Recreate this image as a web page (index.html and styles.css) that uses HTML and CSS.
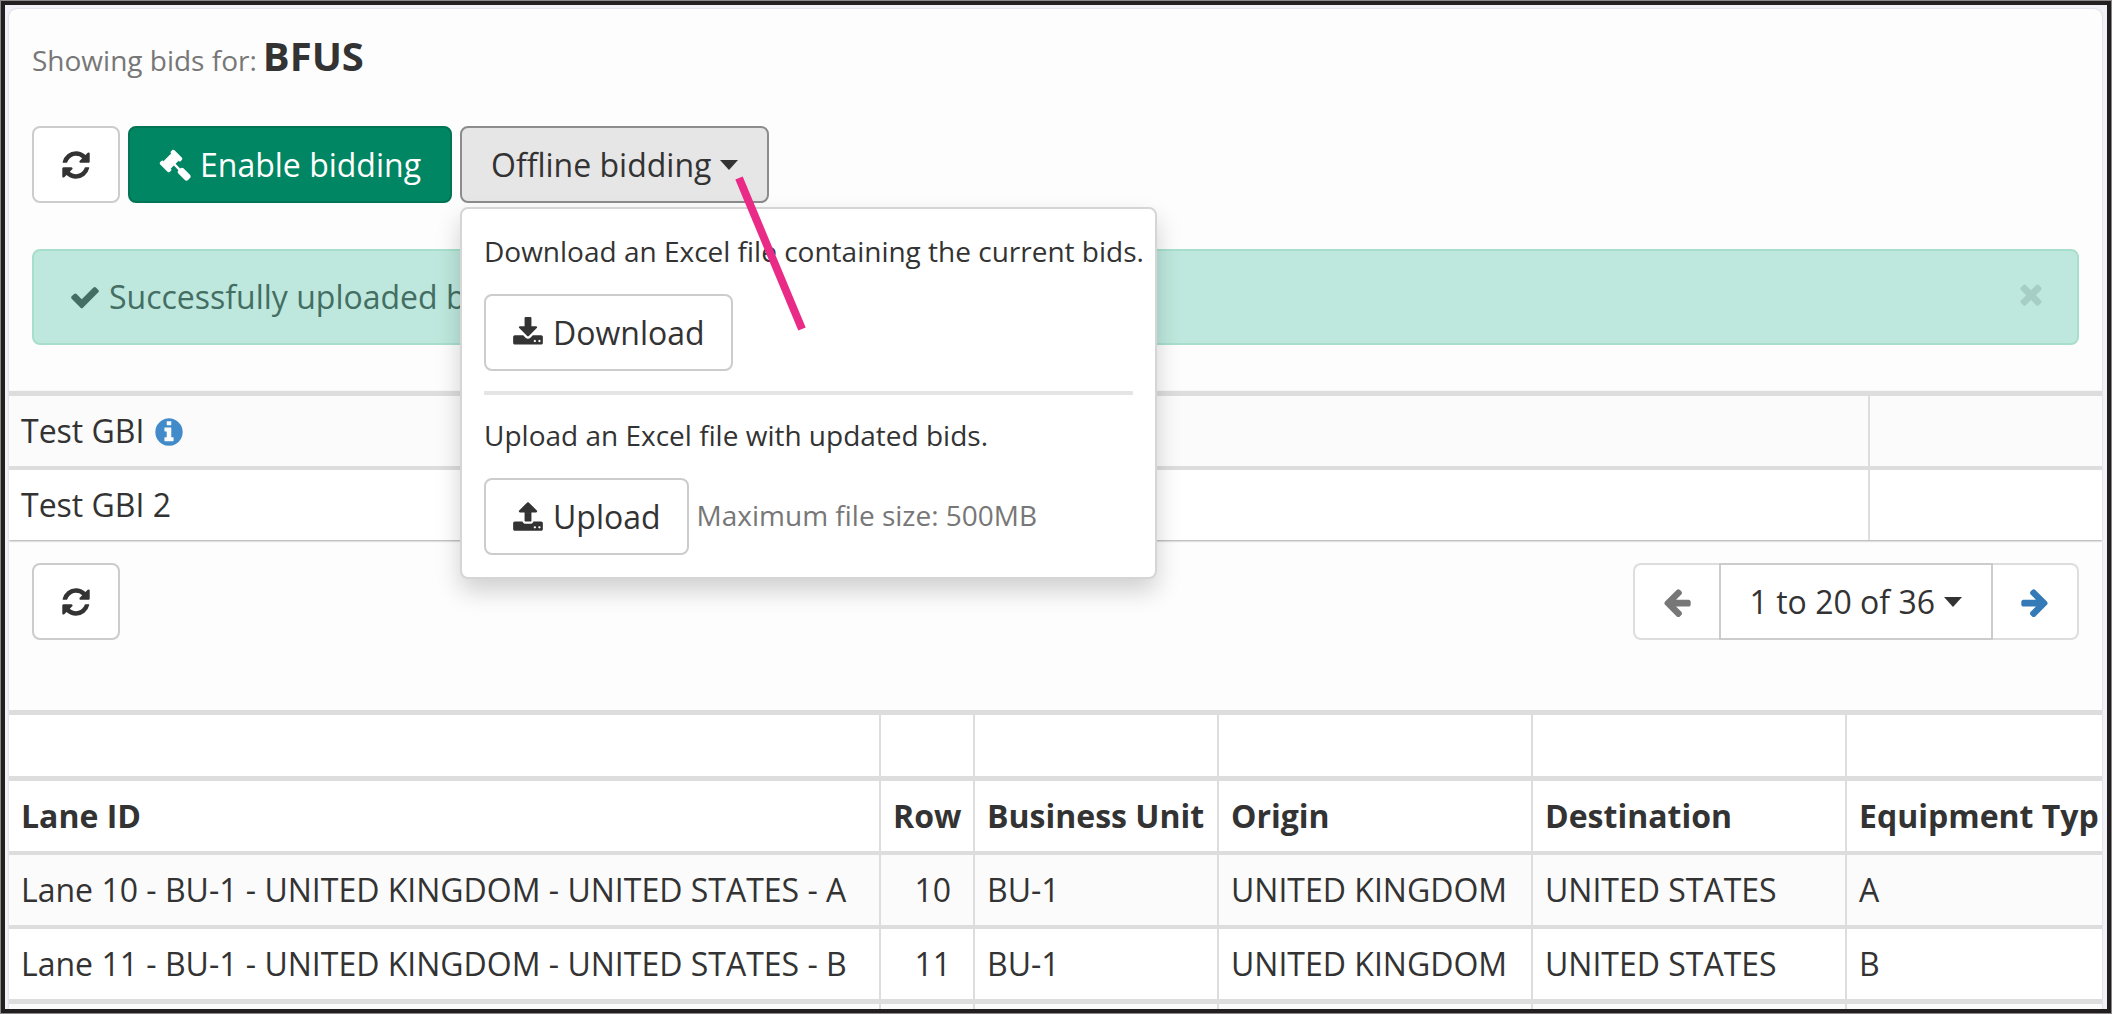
FILE: index.html
```html
<!DOCTYPE html>
<html lang="en">
<head>
<meta charset="utf-8">
<title>Bids</title>
<link rel="stylesheet" href="styles.css">
</head>
<body>
<svg class="sprite" aria-hidden="true">
  <symbol id="i-refresh" viewBox="0 0 1792 1792"><path d="M1639 1056q0 5-1 7-64 268-268 434.500t-478 166.500q-146 0-282.500-55t-243.500-157l-129 129q-19 19-45 19t-45-19-19-45v-448q0-26 19-45t45-19h448q26 0 45 19t19 45-19 45l-137 137q71 66 161 102t187 36q134 0 250-65t186-179q11-17 53-117 8-23 30-23h192q13 0 22.500 9.500t9.500 22.500zm25-800v448q0 26-19 45t-45 19h-448q-26 0-45-19t-19-45 19-45l138-138q-148-137-349-137-134 0-250 65t-186 179q-11 17-53 117-8 23-30 23h-199q-13 0-22.500-9.500t-9.500-22.500v-7q65-268 270-434.500t480-166.500q146 0 284 55.500t245 156.500l130-129q19-19 45-19t45 19 19 45z"/></symbol>
  <symbol id="i-gavel" viewBox="0 0 1792 1792"><path d="M1771 1536q0 53-37 90l-107 108q-39 37-91 37-53 0-90-37l-363-364q-38-36-38-90 0-53 43-96l-256-256-126 126q-14 14-34 14t-34-14q2 2 12.500 12t12.500 13 10 11.500 10 13.500 6 13.500 5.500 16.500 1.500 18q0 38-28 68-3 3-16.500 18t-19 20.500-18.500 16.500-22 15.500-22 9-26 4.500q-40 0-68-28l-408-408q-28-28-28-68 0-13 4.500-26t9-22 15.500-22 16.500-18.500 20.500-19 18-16.500q30-28 68-28 10 0 18 1.500t16.500 5.500 13.500 6 13.500 10 11.500 10 13 12.500 12 12.500q-14-14-14-34t14-34l348-348q14-14 34-14t34 14q-2-2-12.500-12t-12.500-13-10-11.500-10-13.500-6-13.500-5.500-16.500-1.500-18q0-38 28-68 3-3 16.500-18t19-20.500 18.500-16.500 22-15.500 22-9 26-4.500q40 0 68 28l408 408q28 28 28 68 0 13-4.500 26t-9 22-15.500 22-16.500 18.500-20.500 19-18 16.500q-30 28-68 28-10 0-18-1.500t-16.500-5.500-13.500-6-13.500-10-11.500-10-13-12.500-12-12.500q14 14 14 34t-14 34l-126 126 256 256q43-43 96-43 52 0 91 37l363 363q37 39 37 91z"/></symbol>
  <symbol id="i-check" viewBox="0 0 1792 1792"><path d="M1671 566q0 40-28 68l-724 724-136 136q-28 28-68 28t-68-28l-136-136-362-362q-28-28-28-68t28-68l136-136q28-28 68-28t68 28l294 295 656-657q28-28 68-28t68 28l136 136q28 28 28 68z"/></symbol>
  <symbol id="i-download" viewBox="0 0 1792 1792"><path d="M1344 1344q0-26-19-45t-45-19-45 19-19 45 19 45 45 19 45-19 19-45zm256 0q0-26-19-45t-45-19-45 19-19 45 19 45 45 19 45-19 19-45zm128-224v320q0 40-28 68t-68 28h-1472q-40 0-68-28t-28-68v-320q0-40 28-68t68-28h465l135 136q58 56 136 56t136-56l136-136h464q40 0 68 28t28 68zm-325-569q17 41-14 70l-448 448q-18 19-45 19t-45-19l-448-448q-31-29-14-70 17-39 59-39h256v-448q0-26 19-45t45-19h256q26 0 45 19t19 45v448h256q42 0 59 39z"/></symbol>
  <symbol id="i-upload" viewBox="0 0 1792 1792"><path d="M1344 1472q0-26-19-45t-45-19-45 19-19 45 19 45 45 19 45-19 19-45zm256 0q0-26-19-45t-45-19-45 19-19 45 19 45 45 19 45-19 19-45zm128-224v320q0 40-28 68t-68 28h-1472q-40 0-68-28t-28-68v-320q0-40 28-68t68-28h427q21 56 70.500 92t110.500 36h256q61 0 110.500-36t70.500-92h427q40 0 68 28t28 68zm-325-648q-17 40-59 40h-256v448q0 26-19 45t-45 19h-256q-26 0-45-19t-19-45v-448h-256q-42 0-59-40-17-39 14-70l448-448q18-19 45-19t45 19l448 448q31 30 14 70z"/></symbol>
  <symbol id="i-arrow" viewBox="0 0 1792 1792"><path d="M1664 896v128q0 53-32.500 90.500t-84.500 37.500h-704l293 294q38 36 38 90t-38 90l-75 76q-37 37-90 37-52 0-91-37l-651-652q-37-37-37-90 0-52 37-91l651-650q38-38 91-38 52 0 90 38l75 74q38 38 38 91t-38 91l-293 293h704q52 0 84.500 37.500t32.500 90.500z"/></symbol>
  <symbol id="i-info" viewBox="0 0 1792 1792"><path d="M1152 1376v-160q0-14-9-23t-23-9h-96v-512q0-14-9-23t-23-9h-320q-14 0-23 9t-9 23v160q0 14 9 23t23 9h96v320h-96q-14 0-23 9t-9 23v160q0 14 9 23t23 9h448q14 0 23-9t9-23zm-128-896v-160q0-14-9-23t-23-9h-192q-14 0-23 9t-9 23v160q0 14 9 23t23 9h192q14 0 23-9t9-23zm640 416q0 209-103 385.500t-279.500 279.500-385.500 103-385.500-103-279.500-279.500-103-385.500 103-385.500 279.500-279.500 385.500-103 385.500 103 279.500 279.500 103 385.500z"/></symbol>
  <symbol id="i-times" viewBox="0 0 1792 1792"><path d="M1490 1322q0 40-28 68l-136 136q-28 28-68 28t-68-28l-294-294-294 294q-28 28-68 28t-68-28l-136-136q-28-28-28-68t28-68l294-294-294-294q-28-28-28-68t28-68l136-136q28-28 68-28t68 28l294 294 294-294q28-28 68-28t68 28l136 136q28 28 28 68t-28 68l-294 294 294 294q28 28 28 68z"/></symbol>
</svg>
<div class="frame">
  <main class="panel">
    <h1 class="title"><span class="title-label">Showing bids for:</span> <span>BFUS</span></h1>

    <div class="toolbar">
      <button class="btn" type="button" aria-label="Refresh bids"><svg class="icon"><use href="#i-refresh"/></svg></button>
      <button class="btn btn-wide btn-primary" type="button"><svg class="icon"><use href="#i-gavel"/></svg>Enable bidding</button>
      <div class="dropdown">
        <button class="btn btn-wide btn-open" type="button" aria-expanded="true">Offline bidding<span class="caret"></span></button>
        <div class="menu">
          <p class="menu-text">Download an Excel file containing the current bids.</p>
          <button class="btn" type="button"><svg class="icon"><use href="#i-download"/></svg>Download</button>
          <hr class="menu-rule">
          <p class="menu-text">Upload an Excel file with updated bids.</p>
          <div class="menu-row">
            <button class="btn" type="button"><svg class="icon"><use href="#i-upload"/></svg>Upload</button>
            <span class="hint">Maximum file size: 500MB</span>
          </div>
        </div>
        <svg class="pointer" viewBox="0 0 80 160" aria-hidden="true"><line x1="8" y1="4" x2="71" y2="155"/></svg>
      </div>
    </div>

    <div class="alert" role="status">
      <svg class="icon"><use href="#i-check"/></svg>
      <span class="alert-text">Successfully uploaded bids.</span>
      <button class="close" type="button" aria-label="Dismiss"><svg class="icon"><use href="#i-times"/></svg></button>
    </div>

    <table class="grid grid-top">
      <colgroup><col><col class="c-side"></colgroup>
      <tbody>
        <tr><td>Test GBI <svg class="icon icon-info" role="img" aria-label="Info"><use href="#i-info"/></svg></td><td></td></tr>
        <tr><td>Test GBI 2</td><td></td></tr>
      </tbody>
    </table>

    <div class="pager">
      <button class="btn" type="button" aria-label="Refresh lanes"><svg class="icon"><use href="#i-refresh"/></svg></button>
      <nav class="pages" aria-label="Pages">
        <button class="btn btn-prev" type="button" aria-label="Previous page"><svg class="icon"><use href="#i-arrow"/></svg></button>
        <button class="btn btn-wide btn-range" type="button">1 to 20 of 36<span class="caret"></span></button>
        <button class="btn btn-next" type="button" aria-label="Next page"><svg class="icon icon-flip"><use href="#i-arrow"/></svg></button>
      </nav>
    </div>

    <table class="grid lanes">
      <colgroup><col class="c-lane"><col class="c-row"><col class="c-unit"><col class="c-place"><col class="c-place"><col></colgroup>
      <thead>
        <tr class="filter"><td></td><td></td><td></td><td></td><td></td><td></td></tr>
        <tr><th>Lane ID</th><th>Row</th><th>Business Unit</th><th>Origin</th><th>Destination</th><th>Equipment Typ</th></tr>
      </thead>
      <tbody>
        <tr><td>Lane 10 - BU-1 - UNITED KINGDOM - UNITED STATES - A</td><td class="num">10</td><td>BU-1</td><td>UNITED KINGDOM</td><td>UNITED STATES</td><td>A</td></tr>
        <tr><td>Lane 11 - BU-1 - UNITED KINGDOM - UNITED STATES - B</td><td class="num">11</td><td>BU-1</td><td>UNITED KINGDOM</td><td>UNITED STATES</td><td>B</td></tr>
        <tr><td></td><td></td><td></td><td></td><td></td><td></td></tr>
      </tbody>
    </table>
  </main>
</div>
</body>
</html>
```
FILE: styles.css
```css
* { box-sizing: border-box; }

body {
  margin: 0;
  padding: 1px;
  background: #8a8889;
  color: #333;
  font: 32px/46px "Open Sans", "Noto Sans", sans-serif;
}

.sprite { display: none; }

.frame {
  height: calc(100vh - 2px);
  overflow: hidden;
  padding: 4px 5px 0 4px;
  border: 4px solid #231f20;
  background: #f1f1f7;
}

.panel {
  min-height: 100%;
  padding-top: 20px;
  overflow: hidden;
  border-radius: 8px 8px 0 0;
  background: #fdfdfd;
  box-shadow: 0 0 2px rgba(0, 0, 0, 0.2);
}

.icon {
  flex: none;
  width: 32px;
  height: 32px;
  fill: currentColor;
}

.title {
  display: flex;
  align-items: baseline;
  gap: 6px;
  margin: 0 23px 43px;
  font-size: 40px;
  line-height: 54px;
  font-weight: 700;
}

.title-label {
  color: #777;
  font-size: 28px;
  line-height: 46px;
  font-weight: 400;
}

.toolbar {
  display: flex;
  gap: 8px;
  margin: 0 23px 46px;
}

.btn {
  display: inline-flex;
  align-items: center;
  gap: 9px;
  height: 77px;
  margin: 0;
  padding: 0 26px;
  border: 2px solid #ccc;
  border-radius: 8px;
  background: #fff;
  color: #333;
  font: inherit;
  white-space: nowrap;
}

.btn-wide { padding: 0 29px; }

.btn-primary {
  border-color: #007454;
  background: #008663;
  color: #fff;
}

.btn-open {
  border-color: #8c8c8c;
  background: #e6e6e6;
}

.caret {
  border: 9px solid transparent;
  border-top: 10px solid currentColor;
  border-bottom: 0;
}

.dropdown { position: relative; }

.menu {
  position: absolute;
  z-index: 1;
  top: 100%;
  left: 0;
  width: 697px;
  margin-top: 4px;
  padding: 22px;
  border: 2px solid #d5d5d5;
  border-radius: 8px;
  background: #fff;
  box-shadow: 0 12px 24px rgba(0, 0, 0, 0.18);
}

.menu-text {
  margin: 0 0 23px;
  font-size: 28px;
  line-height: 40px;
  white-space: nowrap;
}

.menu-rule {
  height: 4px;
  margin: 20px 0;
  border: 0;
  background: #e5e5e5;
}

.menu-row {
  display: flex;
  align-items: center;
  gap: 8px;
}

.hint {
  padding-bottom: 4px;
  color: #777;
  font-size: 28px;
}

.pointer {
  position: absolute;
  z-index: 2;
  top: 48px;
  right: -42px;
  width: 80px;
  height: 160px;
  stroke: #e92a87;
  stroke-width: 8;
}

.alert {
  display: flex;
  align-items: center;
  gap: 8px;
  height: 96px;
  margin: 0 23px 46px;
  padding: 0 30px 0 35px;
  border: 2px solid #a8dfcc;
  border-radius: 8px;
  background: #bee8dd;
  color: #446e63;
}

.alert-text { flex: 1; }

.close {
  display: flex;
  margin-bottom: 6px;
  padding: 0;
  border: 0;
  background: none;
  color: #a6cec4;
}

.grid {
  width: 100%;
  border-spacing: 0;
  table-layout: fixed;
  background: #fff;
}

.grid td,
.grid th {
  height: 74px;
  padding: 12px;
  border-top: 4px solid #ddd;
  border-left: 2px solid #ddd;
  text-align: left;
  white-space: nowrap;
}

.grid td:first-child,
.grid th:first-child { border-left: 0; }

.grid tr:first-child > *,
.lanes thead tr > *,
.lanes tr:last-child > * { border-top-width: 5px; }

.lanes tbody tr:first-child > * { border-top-width: 4px; }

.grid tbody tr:nth-child(odd) { background: #fbfbfb; }

.grid-top { box-shadow: 0 1px 2px rgba(0, 0, 0, 0.35); }

.grid .filter td { height: 66px; padding: 0; }

.grid .num { padding-right: 22px; text-align: right; }

.icon-info {
  color: #428bca;
  vertical-align: -5px;
}

.c-side { width: 234px; }
.c-lane { width: 870px; }
.c-row { width: 94px; }
.c-unit { width: 244px; }
.c-place { width: 314px; }

.pager {
  display: flex;
  justify-content: space-between;
  margin: 23px 23px 70px;
}

.pages { display: flex; }

.btn-prev {
  border-color: #ddd;
  border-right: 0;
  border-radius: 8px 0 0 8px;
  color: #777;
}

.btn-range { border-radius: 0; }

.btn-next {
  border-color: #ddd;
  border-left: 0;
  border-radius: 0 8px 8px 0;
  color: #337ab7;
}

.icon-flip { transform: scaleX(-1); }
```
